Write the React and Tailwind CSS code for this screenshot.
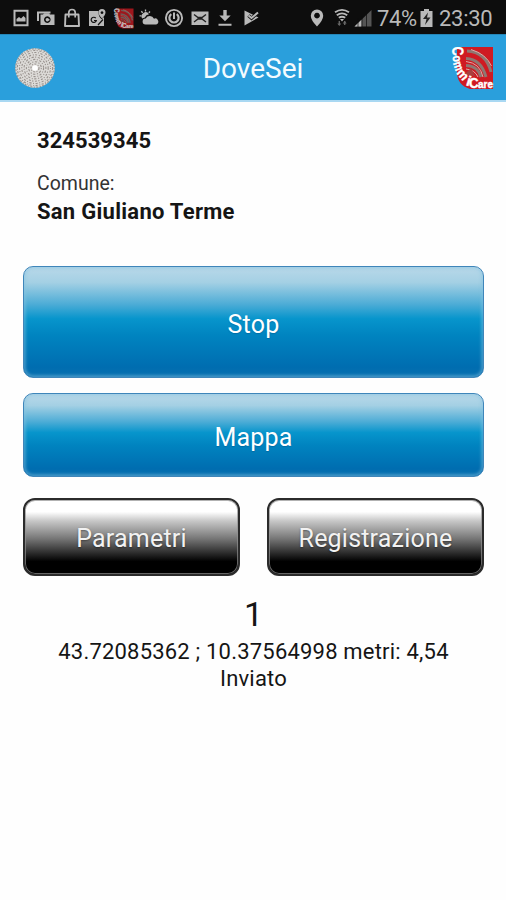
// App.jsx - DoveSei main screen (tracking status + actions)

import React from 'react';
import clsx from 'clsx';

// status bar glyph on a 20x20 grid
function Glyph({ children, className }) {
  return (
    <svg viewBox="0 0 20 20" className={clsx('h-5 w-5 shrink-0 text-[#b9b9b9]', className)} fill="currentColor">
      {children}
    </svg>
  );
}

function CommiCareLogo({ className }) {
  return (
    <svg viewBox="0 0 44 44" className={clsx('overflow-visible', className)} fontFamily="'Liberation Sans', Arial, sans-serif" fontWeight="700">
      <path d="M7 1H43V43H20Q7 39 7 26Z" fill="#cf1a22" />
      {/* radio waves */}
      <g fill="none" stroke="#8f7771" strokeWidth="3">
        <path d="M17 5Q36 6 41 26" />
        <path d="M16 12.500Q31 13 36 31" />
        <path d="M16 19.500Q28 20 31 31" />
      </g>
      <g fill="none" stroke="#dcaaa6" strokeWidth="1">
        <path d="M21 3.500Q36 8 41.500 20" />
        <path d="M16 15.500Q30 17 33 31" />
        <path d="M16 23Q25 24 28 31" />
      </g>
      <path d="M14 29L21 22L25 30Z" fill="#a8403f" />
      <g fill="#fff" stroke="#fff" strokeWidth="0.4">
        <text transform="translate(2 1) rotate(86)" fontSize="16" textLength="9" lengthAdjust="spacingAndGlyphs">C</text>
        <text transform="translate(2.5 10) rotate(82)" fontSize="13" textLength="6.500" lengthAdjust="spacingAndGlyphs">o</text>
        <text transform="translate(3 17) rotate(72)" fontSize="13" textLength="9" lengthAdjust="spacingAndGlyphs">m</text>
        <text transform="translate(6 27) rotate(50)" fontSize="13" textLength="11" lengthAdjust="spacingAndGlyphs">m</text>
        <text transform="translate(15.500 39) rotate(18)" fontSize="14">i</text>
        <text x="19" y="42" fontSize="14.500" textLength="9.500" lengthAdjust="spacingAndGlyphs">C</text>
        <text x="28" y="42" fontSize="11" textLength="15" lengthAdjust="spacingAndGlyphs">are</text>
      </g>
    </svg>
  );
}

// disc of broken concentric ridges
const RIDGES = [
  { r: 4, dash: '2 1.6 1 1.3' },
  { r: 6.3, dash: '1.2 1.6 2.4 1.3' },
  { r: 8.6, dash: '2.2 1.5 1 1.7' },
  { r: 10.9, dash: '1.1 1.6 2.3 1.4' },
  { r: 13.2, dash: '2 1.7 1.2 1.3' },
  { r: 15.5, dash: '1 1.5 2.2 1.6' },
  { r: 17.6, dash: '2.1 1.4 1 1.7' },
  { r: 19.2, dash: '1.2 1.5 1.9 1.4' },
];

function Fingerprint() {
  return (
    <svg viewBox="0 0 40 40" className="-ml-px h-10 w-10">
      <circle cx="20" cy="20" r="19.8" fill="#dddbd8" />
      {RIDGES.map(({ r, dash }) => (
        <circle key={r} cx="20" cy="20" r={r} fill="none" stroke="#98928e" strokeWidth="1.1" strokeDasharray={dash} />
      ))}
      <circle cx="20" cy="20" r="2.8" fill="#fff" />
    </svg>
  );
}

function StatusBar() {
  return (
    <div className="flex h-[34px] items-center justify-between bg-[#0d0d0d] pt-0.5 pr-3 pl-[11px]">
      <div className="flex items-center gap-[5.4px]">
        <Glyph>
          <path fillRule="evenodd" d="M2.500 1.800h15v16.400h-15zM4.500 3.800v12.400h11V3.800z" />
          <path d="M5.500 13.500V11l2.500-2 2 1.500 2.500-2.500 2 2v3.500z" />
        </Glyph>
        <Glyph>
          <path d="M1 3.500h13.500v2H3v7.500H1z" />
          <path fillRule="evenodd" d="M4.500 6.500h2.500l1-1.200h5l1 1.200h4.500v10.500h-14zM11.300 8.300a3.300 3.300 0 1 0 .01 0zM11.300 10a1.700 1.700 0 1 1-.01 0z" />
          <path d="M10.500 11h3v1.500h-3z" />
        </Glyph>
        <Glyph>
          <path d="M3.500 6.500H16.500L17 18H3Z" fill="none" stroke="currentColor" strokeWidth="1.900" strokeLinejoin="round" />
          <path d="M6.800 9.500V4.500Q6.800 1.500 10 1.500T13.200 4.500V9.500" fill="none" stroke="currentColor" strokeWidth="1.700" />
        </Glyph>
        <Glyph>
          <path d="M2 3h9.500q-.5 5 3 8.200L17 9v9H2z" />
          <path fillRule="evenodd" d="M15 1a3.500 3.500 0 0 1 3.500 3.500Q18.500 7 15 10.500 11.500 7 11.500 4.500A3.500 3.500 0 0 1 15 1zM15 3.200a1.400 1.400 0 1 0 .01 0z" />
          <path d="M8.800 10.200A2.600 2.600 0 1 0 9.300 12.500H7M11 17l5-5.500" fill="none" stroke="#111" strokeWidth="1.200" />
        </Glyph>
        <CommiCareLogo className="h-[21px] w-[21px] shrink-0 opacity-75" />
        <Glyph>
          <path d="M6.500 16.500a3 3 0 0 1 .2-6 4.700 4.700 0 0 1 8.300.2 3 3 0 0 1 2.300 5.800z" />
          <path d="M3.200 10.500a3.900 3.900 0 0 1 6.800-4.300Q7 6.700 5.800 9.500z" />
          <path d="M6.500 1.500v2M2.300 3.200l1.400 1.500M.5 7.800h1.800M11 3.500L9.800 4.800" stroke="currentColor" strokeWidth="1.300" />
        </Glyph>
        <Glyph>
          <g fill="none" stroke="currentColor">
            <circle cx="10" cy="10" r="8.100" strokeWidth="1.900" />
            <path d="M7.300 6.200A4.600 4.600 0 1 0 12.700 6.200" strokeWidth="2.200" />
            <path d="M10 4.500V11" strokeWidth="2" />
          </g>
        </Glyph>
        <Glyph>
          <path d="M1.500 3.500h17v13.500h-17z" />
          <path d="M4 6.500L8 9.500H12L16 6.500M4 14L8 11H12L16 14" fill="none" stroke="#222" strokeWidth="1.400" />
        </Glyph>
        <Glyph>
          <path d="M8.300 2h3.400v5.500h4L10 13.300 4.300 7.500h4zM3.500 15.800h13v2h-13z" />
        </Glyph>
        <Glyph>
          <path d="M3.500 2.500L17.500 9.500L3.500 17.500z" />
          <path d="M7.500 7.500L10.500 10.300L17 4.500" fill="none" stroke="#111" strokeWidth="3.400" />
          <path d="M7.500 7.500L10.500 10L17 4.500" fill="none" stroke="currentColor" strokeWidth="2" />
        </Glyph>
      </div>

      <div className="flex items-center">
        <Glyph className="mr-[5px]">
          <path fillRule="evenodd" d="M10 1.500a6.200 6.200 0 0 1 6.200 6.200Q16.200 12 10 18.500 3.800 12 3.800 7.700A6.200 6.200 0 0 1 10 1.500zM10 4.700a2.900 2.900 0 1 0 .01 0z" />
        </Glyph>
        <Glyph className="mr-px">
          <path d="M3 4.300Q10-.5 17 4.300M4.800 7.200Q10 3.500 15.200 7.200M6.800 9.800Q10 7.700 13.200 9.800" fill="none" stroke="currentColor" strokeWidth="1.900" />
          <path d="M8 11h4l-2 2.500z" />
          <path d="M7.300 13v4M12.700 13v4" stroke="#666" strokeWidth="1.400" />
          <path d="M5.300 15.500h4L7.300 18zM10.700 15.500h4l-2-2.500z" fill="#666" />
        </Glyph>
        <Glyph className="mr-1">
          <path d="M1.500 18.500L18.500 2V18.500z" fill="#555" />
          <path d="M1.500 18.500L8.500 11.700V18.500z" />
          <path d="M5 10v9M9 8v11M13.500 5v14" stroke="#0d0d0d" strokeWidth=".7" />
        </Glyph>
        <span className="w-[43px] pt-0.5 text-[22px] leading-none tracking-[-0.4px] whitespace-nowrap text-[#b9b9b9]">74%</span>
        <svg viewBox="0 0 13 18" className="mr-[6px] h-[18px] w-[13px] shrink-0 text-[#b9b9b9]">
          <path d="M4 0h5v2h3.500v16H.5V2H4z" fill="currentColor" />
          <path d="M8 3.500L3 10h3.500L5 16l5.500-7.500H7z" fill="#222" />
        </svg>
        <span className="w-[55px] pt-0.5 text-[22px] leading-none tracking-[-0.3px] whitespace-nowrap text-[#b9b9b9]">23:30</span>
      </div>
    </div>
  );
}

function BlueButton({ label, className }) {
  return (
    <button
      className={clsx(
        'flex w-full items-center justify-center rounded-[10px] border border-[#3f86ba] pt-[5px] text-[25px] tracking-[0.2px] text-white',
        'bg-[linear-gradient(180deg,#b9d8e9_0%,#a4d0e4_14%,#4cacd6_34%,#0795cc_47%,#0084c0_62%,#006db0_91%,#0870b0_100%)]',
        'shadow-[inset_0_0_3px_2px_rgba(135,195,225,0.45)]',
        className
      )}
    >
      <span className="[text-shadow:0_1px_1px_rgba(0,70,120,0.35)]">{label}</span>
    </button>
  );
}

function DarkButton({ label }) {
  return (
    <button className="flex h-[78px] w-[217px] items-center justify-center rounded-[12px] border-2 border-[#2b2b2b] bg-[linear-gradient(180deg,#fff_0%,#fff_16%,#c8c8c8_28%,#777_52%,#000_83%,#000_100%)] pt-[3px] text-[25px] tracking-[0.2px] text-[#f2f2f2] shadow-[inset_0_0_0_1px_rgba(145,145,145,0.7)]">
      <span className="[text-shadow:0_1px_2px_rgba(0,0,0,0.45)]">{label}</span>
    </button>
  );
}

export default function App() {
  return (
    <div className="h-[900px] w-[506px] overflow-hidden bg-[#fefefe] font-['Roboto',sans-serif] text-[#151515]">
      <StatusBar />

      {/* header */}
      <header className="grid h-[68px] grid-cols-[44px_1fr_44px] items-center border-t border-b-2 border-t-[#2586b8] border-b-[#a9d8f2] bg-[#2a9fdc] pr-3 pl-4">
        <Fingerprint />
        <h1 className="pt-[3px] pr-1 text-center text-[28px] leading-none text-[#f3fbff]">DoveSei</h1>
        <CommiCareLogo className="h-11 w-11" />
      </header>

      {/* user info */}
      <section className="h-[164px] pt-[25px] pl-[37px]">
        <p className="text-[22px] leading-[28px] font-bold tracking-[0.05px]">324539345</p>
        <p className="mt-4 text-[19.5px] leading-[26px] text-[#333]">Comune:</p>
        <p className="mt-px text-[22px] leading-[28px] font-bold tracking-[0.27px]">San Giuliano Terme</p>
      </section>

      {/* actions */}
      <main className="px-[23px] pr-[22px]">
        <BlueButton label="Stop" className="h-[112px]" />
        <BlueButton label="Mappa" className="mt-[15px] h-[84px]" />
        <div className="mt-[21px] flex justify-between">
          <DarkButton label="Parametri" />
          <DarkButton label="Registrazione" />
        </div>
      </main>

      {/* last position sent */}
      <footer className="pt-[18px] pl-px text-center text-[22px] leading-[27px]">
        <p className="text-[34px] leading-[40px]">1</p>
        <p className="mt-1 tracking-[0.2px]">43.72085362 ; 10.37564998 metri: 4,54</p>
        <p className="tracking-[0.2px]">Inviato</p>
      </footer>
    </div>
  );
}
